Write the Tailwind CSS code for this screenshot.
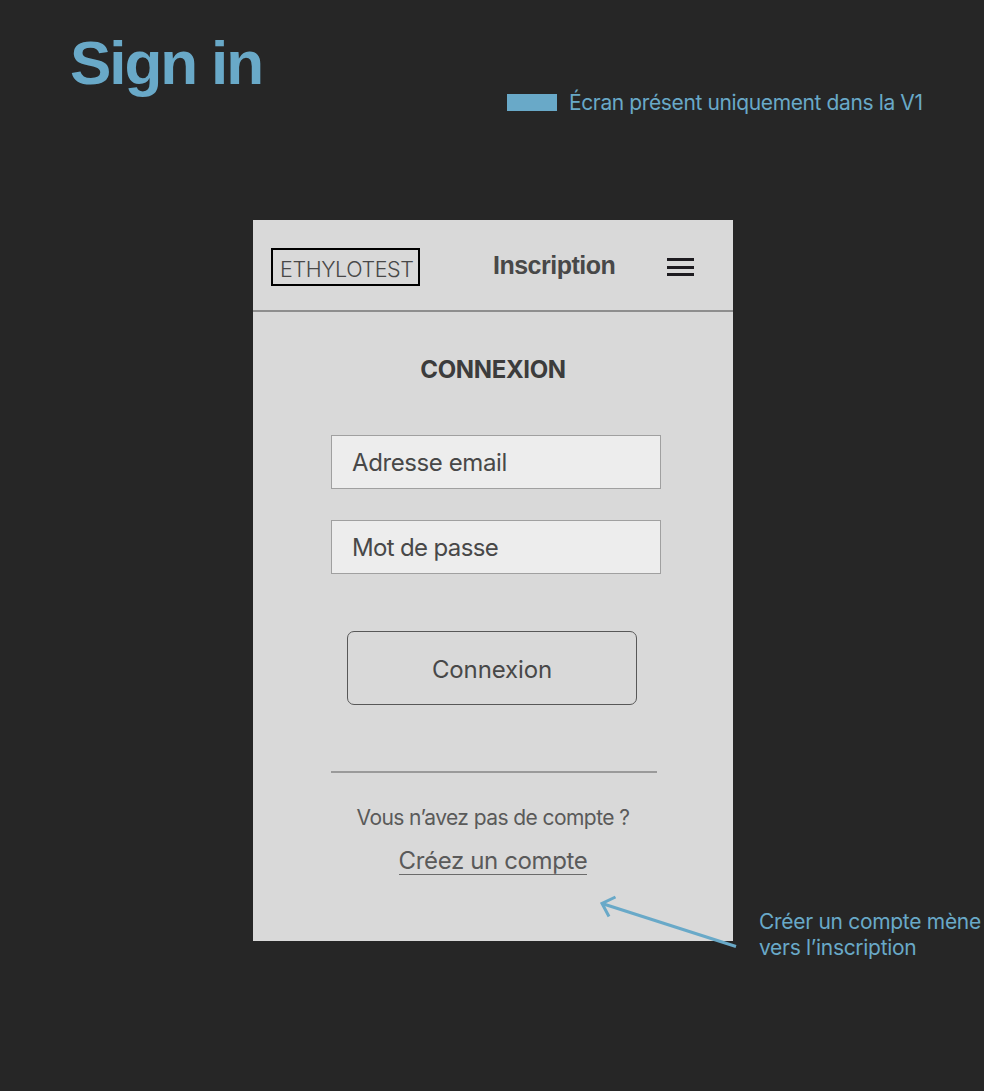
<!DOCTYPE html>
<html lang="fr">
<head>
<meta charset="utf-8">
<title>Sign in</title>
<script src="https://cdn.jsdelivr.net/npm/@tailwindcss/browser@4"></script>
</head>
<body class="bg-[#262626] font-['Inter',sans-serif] whitespace-nowrap">
<div class="w-[984px] h-[1091px] overflow-hidden">
  <header class="flex h-[220px] text-[#69a9c8]">
    <h1 class="w-[507px] pl-[70px] pt-[33px] font-['Liberation_Sans',sans-serif] text-[62px] leading-[60px] font-bold tracking-[-2.1px]">Sign in</h1>
    <div class="flex items-center h-6 mt-[90px] gap-[12px]">
      <span class="block w-[50px] h-[17px] bg-[#69a9c8]"></span>
      <p class="pt-[2px] text-[21px] leading-6 tracking-[-0.38px]">Écran présent uniquement dans la V1</p>
    </div>
  </header>
  <div class="flex pl-[253px]">
    <main class="relative w-[480px] h-[721px] bg-[#d9d9d9] text-[#484848]">
      <nav class="flex h-[92px] border-b-2 border-[#8e8e8e]">
        <div class="flex items-center mt-[28px] ml-[18px] w-[149px] h-[38px] border-2 border-black pl-[7px] pt-[3px]">
          <span class="text-[21.5px] leading-6 font-light tracking-[-0.4px]">ETHYLOTEST</span>
        </div>
        <span class="w-[174px] pl-[73px] mt-[30px] font-['Liberation_Sans',sans-serif] text-[25px] leading-[30px] font-bold tracking-[-0.5px]">Inscription</span>
        <div class="mt-[38px] ml-[73px] flex flex-col gap-[4.5px] w-[27px]">
          <span class="h-[3px] bg-[#1d1b20]"></span>
          <span class="h-[3px] bg-[#1d1b20]"></span>
          <span class="h-[3px] bg-[#1d1b20]"></span>
        </div>
      </nav>
      <h2 class="mt-[43px] text-center text-[24px] leading-[30px] font-bold tracking-[-0.35px] text-[#3c3c3c]">CONNEXION</h2>
      <div class="flex items-center mt-[50px] ml-[78px] w-[330px] h-[54px] border-[1.5px] border-[#a0a0a0] bg-[#ededed] pl-[20px] pt-[2px] text-[24px] tracking-[-0.4px]">Adresse email</div>
      <div class="flex items-center mt-[31px] ml-[78px] w-[330px] h-[54px] border-[1.5px] border-[#a0a0a0] bg-[#ededed] pl-[20px] pt-[2px] text-[24px] tracking-[-0.65px]">Mot de passe</div>
      <div class="flex items-center justify-center mt-[57px] ml-[94px] w-[290px] h-[74px] rounded-[7px] border-[1.5px] border-[#585858] pt-[3px] text-[24px] tracking-[-0.12px]">Connexion</div>
      <div class="mt-[66px] ml-[78px] w-[326px] h-[2px] bg-[#9a9a9a]"></div>
      <p class="mt-[33px] text-center text-[21px] leading-[24px] text-[#5a5a5a] tracking-[-0.57px]">Vous n’avez pas de compte ?</p>
      <div class="flex justify-center mt-[15px]"><span class="h-[30px] border-b border-[#6b6b6b] text-[24px] leading-[32px] text-[#5a5a5a] tracking-[-0.37px]">Créez un compte</span></div>
      <svg class="absolute left-[340px] top-[670px]" width="150" height="65" viewBox="593 890 150 65" fill="none" stroke="#69a9c8" stroke-width="3"><path d="M602 903.5L736 946.5M615.5 897L602 903.5L609 916.5"/></svg>
    </main>
    <p class="ml-[26px] mt-[689px] text-[21px] leading-[25.5px] tracking-[-0.3px] text-[#69a9c8]">Créer un compte mène<br>vers l’inscription</p>
  </div>
</div>
</body>
</html>
